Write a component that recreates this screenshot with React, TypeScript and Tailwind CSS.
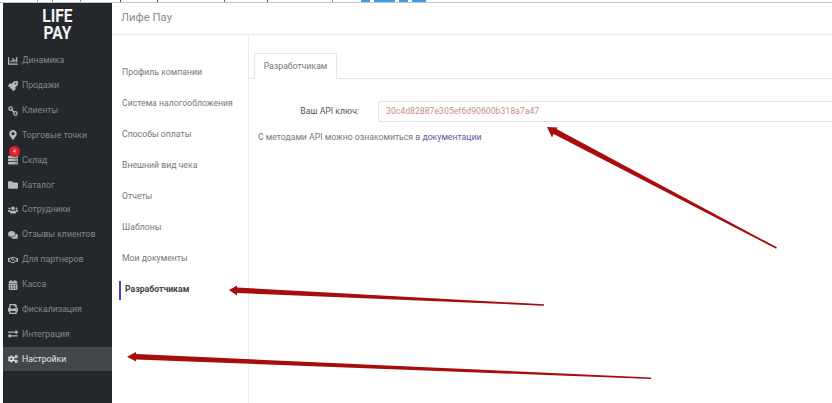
import {
  FaChartBar,
  FaRocket,
  FaMapMarkerAlt,
  FaServer,
  FaFolder,
  FaUsers,
  FaComments,
  FaRegHandshake,
  FaCalendarAlt,
  FaPrint,
  FaExchangeAlt,
  FaCogs,
} from "react-icons/fa";

// two circles joined by a bar, the clients icon in the reference
const LinkDots = ({ className }: { className?: string }) => (
  <svg className={className} width="10" height="10" viewBox="0 0 10 10" fill="none" stroke="currentColor">
    <circle cx="2.6" cy="2.6" r="1.7" strokeWidth="1.3" />
    <circle cx="7.4" cy="7.4" r="1.7" strokeWidth="1.3" />
    <path d="M3.8 3.8L6.2 6.2" strokeWidth="1.5" />
  </svg>
);

const menu = [
  { label: "Динамика", icon: FaChartBar },
  { label: "Продажи", icon: FaRocket },
  { label: "Клиенты", icon: LinkDots },
  { label: "Торговые точки", icon: FaMapMarkerAlt },
  { label: "Склад", icon: FaServer, badge: true },
  { label: "Каталог", icon: FaFolder },
  { label: "Сотрудники", icon: FaUsers },
  { label: "Отзывы клиентов", icon: FaComments },
  { label: "Для партнеров", icon: FaRegHandshake },
  { label: "Касса", icon: FaCalendarAlt },
  { label: "Фискализация", icon: FaPrint },
  { label: "Интеграция", icon: FaExchangeAlt },
  { label: "Настройки", icon: FaCogs, active: true },
];

const settings = [
  "Профиль компании",
  "Система налогообложения",
  "Способы оплаты",
  "Внешний вид чека",
  "Отчеты",
  "Шаблоны",
  "Мои документы",
];

export default function App() {
  return (
    <div className="relative h-[403px] w-[832px] overflow-hidden bg-white font-['Roboto',sans-serif] text-[8.7px] text-[#777]">
      <div className="flex h-[3px] items-start border-b border-[#c4c4c4]">
        <div className="ml-[37px] h-[2px] w-px bg-[#a58ac0]"></div>
        <div className="ml-[14px] h-[2px] w-px bg-[#7fa0c0]"></div>
        <div className="ml-[27px] h-[2px] w-px bg-[#a58ac0]"></div>
        <div className="ml-[39px] h-[2px] w-px bg-[#8a1f8a]"></div>
        <div className="ml-[36px] h-[2px] w-px bg-[#8a1f8a]"></div>
        <div className="ml-[66px] h-[2px] w-px bg-[#b0503a]"></div>
        <div className="ml-[42px] h-[2px] w-px bg-[#8a1f8a]"></div>
        <div className="ml-[64px] h-[2px] w-px bg-[#d09040]"></div>
        <div className="ml-[28px] h-[2px] w-[9px] bg-[#3f9bf0]"></div>
        <div className="ml-[4px] h-[2px] w-[21px] bg-[#3f9bf0]"></div>
        <div className="ml-[4px] h-[2px] w-[9px] bg-[#3f9bf0]"></div>
        <div className="ml-[4px] h-[2px] w-[14px] bg-[#3f9bf0]"></div>
      </div>

      <div className="flex h-[400px]">
        <aside className="ml-[3px] w-[109px] shrink-0 bg-[#24272c] text-[#83878d]">
          <div className="flex h-[45.5px] justify-center pt-[4px]">
            <div className="scale-x-[0.82] text-center text-[19px] leading-[17px] font-bold text-[#f2f2f2]">
              LIFE
              <br />
              PAY
            </div>
          </div>
          <nav>
            {menu.map((item) => (
              <div
                key={item.label}
                className={
                  item.active
                    ? "flex h-[24.85px] items-center bg-[#43474b] text-[#e6e6e6]"
                    : "flex h-[24.85px] items-center"
                }
              >
                <div className="relative flex w-[19px] justify-center pl-[1px] text-[10px]">
                  <item.icon className={item.active ? "text-[#e6e6e6]" : "text-[#b4b8bf]"} />
                  {item.badge && (
                    <span className="absolute top-[-9px] left-[6px] flex h-[11px] w-[11px] items-center justify-center rounded-full bg-[#e0202c] text-[5px] leading-none text-white">
                      4
                    </span>
                  )}
                </div>
                <span className="whitespace-nowrap">{item.label}</span>
              </div>
            ))}
          </nav>
        </aside>

        <main className="min-w-0 flex-1">
          <header className="flex h-[32px] items-center border-b border-[#ececec] pl-[9px] text-[11.3px] text-[#8a8a8a]">
            Лифе Пау
          </header>
          <div className="flex h-[368px]">
            <div className="w-[137px] shrink-0 border-r border-[#ececec] pt-[22.5px]">
              {settings.map((s) => (
                <div key={s} className="flex h-[31px] items-center pl-[10px] whitespace-nowrap">
                  {s}
                </div>
              ))}
              <div className="ml-[7px] flex h-[19px] translate-y-[6px] items-center border-l-2 border-[#3f45c0] pl-[4px] font-bold text-[#444]">
                Разработчикам
              </div>
            </div>

            <div className="min-w-0 flex-1 pt-[18px]">
              <div className="h-[26px] border-b border-[#e4e4e4] pl-[5px]">
                <div className="flex h-[26px] w-[83px] items-center justify-center rounded-t-[2px] border border-b-0 border-[#e4e4e4] bg-white text-[#777]">
                  Разработчикам
                </div>
              </div>
              <div className="mt-[22px] flex items-center">
                <div className="w-[129px] pr-[19px] text-right whitespace-nowrap text-[#555]">Ваш API ключ:</div>
                <div className="flex h-[21px] flex-1 items-center rounded-l-[3px] border border-r-0 border-[#e2e2e2] pt-[1px] pl-[7px] text-[#c58f80]">
                  30c4d82887e305ef6d90600b318a7a47
                </div>
              </div>
              <p className="mt-[9px] pl-[9px] whitespace-nowrap">
                С методами API можно ознакомиться в <span className="text-[#5a5a9a]">документации</span>
              </p>
            </div>
          </div>
        </main>
      </div>

      {/* annotation arrows */}
      <svg className="absolute top-0 left-0" width="832" height="403" fill="#a80d0d">
        <polygon points="547,127 558,127.5 556.5,129 776.9,247.3 776.1,248.7 553.6,134.1 552,137.5" />
        <polygon points="229,290 237,285.5 237,287.5 544,304.3 544,305.7 237,293 237,295.5" />
        <polygon points="127,356.7 136,352 136,354 651,377.5 651,379 136,359.5 136,361.5" />
      </svg>
    </div>
  );
}
